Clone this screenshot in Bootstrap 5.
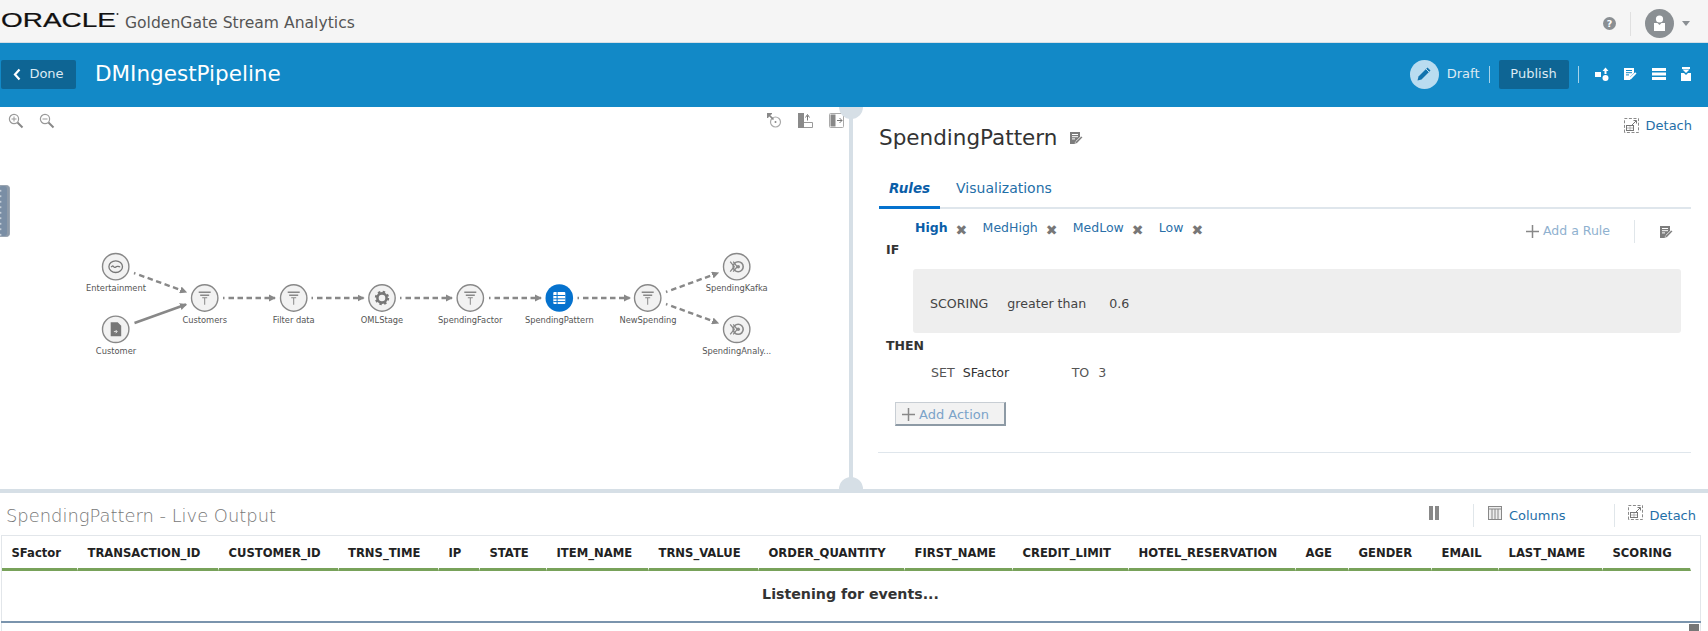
<!DOCTYPE html>
<html lang="en">
<head>
  <meta charset="UTF-8">
  <meta name="viewport" content="width=device-width, initial-scale=1.0">
  <title>DMIngestPipeline</title>
  <link rel="stylesheet" href="https://cdn.jsdelivr.net/npm/bootstrap@5.3.0/dist/css/bootstrap.min.css">
  <style>
    body { font-family: "DejaVu Sans", sans-serif; font-size: 13px; color: #333; height: 631px; overflow: hidden; background: #fff; }
    a { text-decoration: none; color: #1f6fa8; }
    .top-bar { height: 43px; background: #f5f5f5; border-bottom: 1px solid #d6dfe6; padding: 5px 16px 0 0; }
    .logo-svg { margin-left: 1px; }
    .app-name { font-size: 15.6px; color: #555; margin-left: 6px; }
    .top-sep { width: 1px; height: 24px; background: #e0e0e0; margin: 0 14px; }
    .pipe-bar { height: 64px; background: #1289c7; color: #fff; padding: 0 16px 2px 1px; }
    .pipe-btn { height: 29px; background: #0e6594; color: #dceaf3; border: 0; border-radius: 2px; font-size: 13px; padding: 0; }
    .btn-done { width: 75px; margin-right: 19px; }
    .btn-publish { width: 70px; margin: 0 9px; }
    .pipe-title { font-size: 21.5px; margin: 0; font-weight: 400; }
    .draft-dot { width: 29px; height: 29px; border-radius: 50%; background: #b9dcf0; margin-right: 8px; }
    .draft-label { color: #dceaf3; margin-right: 9px; }
    .bar-sep { width: 1px; height: 17px; background: #a5d3ea; }
    .bar-icons { gap: 14.5px; margin-left: 16px; }
    .main-row { height: 382px; overflow: hidden; }
    .canvas-pane { width: 849px; flex: none; position: relative; }
    .canvas-pane svg.diagram { display: block; }
    .canvas-pane text { font-family: "DejaVu Sans", sans-serif; font-size: 8.3px; fill: #555; text-anchor: middle; }
    .canvas-tools { position: absolute; top: 6px; left: 8px; right: 5px; }
    .zoom-out { margin-left: 15px; }
    .side-tab { position: absolute; left: 0; top: 78px; width: 10px; height: 52px; background: #7a8ea5 radial-gradient(circle, #c5ced8 .9px, transparent 1.2px) -2px 2px / 5px 5.5px repeat-y; border: 1px solid #9aa5b1; border-left: 0; border-radius: 0 4px 4px 0; box-shadow: inset -2px 0 0 #8e9aa8; }
    .v-split { width: 4px; flex: none; background: #d6dfe6; position: relative; }
    .v-split::before { content: ""; position: absolute; left: -10px; top: -12px; width: 24px; height: 24px; border-radius: 50%; background: #d6dfe6; }
    .rule-pane { flex: 1; padding: 0 17px 0 26px; position: relative; }
    .detach-top { position: absolute; top: 9px; right: 16px; }
    .detach-link { font-size: 13px; gap: 7px; }
    .rule-title { font-size: 21.5px; font-weight: 400; color: #333; margin: 0; height: 61px; gap: 12px; }
    .rule-tabs { border-bottom: 2px solid #dfe6ec; height: 41px; }
    .rule-tabs a { display: block; font-size: 14px; padding: 10px 10px 0; height: 41px; }
    .rule-tabs a.active-tab { font-size: 13.5px; font-weight: 700; font-style: italic; color: #0a5ea8; border-bottom: 3px solid #0572ce; margin-right: 6px; }
    .rule-head { height: 49px; position: relative; padding: 10px 0 0 36px; }
    .rule-link { font-size: 12.5px; margin-right: 8px; color: #2a6fa8; }
    .rule-link.current { font-weight: 700; color: #0a5ea8; }
    .rule-x { color: #777; font-size: 14px; line-height: 1; width: 19px; margin-right: 8px; padding-top: 4px; }
    .rule-word { font-weight: 700; color: #333; font-size: 12.5px; padding-left: 7px; }
    .word-if { position: absolute; left: 7px; top: 32px; padding-left: 0; }
    .add-rule { position: absolute; right: 2px; top: 11px; color: #8fb1cf; font-size: 12.5px; }
    .add-rule-sep { width: 1px; height: 23px; background: #e0e6ea; margin: 0 24px; }
    .cond-box { height: 64px; margin-left: 34px; margin-right: 10px; background: #eee; border-radius: 3px; padding-left: 17px; gap: 19px; color: #444; margin-top: 11px; padding-top: 6px; font-size: 12.6px; }
    .set-row { padding-left: 52px; height: 24px; margin-top: 6px; color: #555; font-size: 12.6px; }
    .set-field { width: 109px; margin-left: 8px; color: #333; }
    .set-val { margin-left: 9px; }
    .add-action { width: 111px; height: 24px; margin-left: 16px; margin-top: 16px; background: #f2f2f2; border: 1px solid #c8ced4; border-right: 2px solid #8d9aa5; border-bottom: 2px solid #8d9aa5; border-radius: 0; color: #7ba3c9; font-size: 13px; padding: 2px 0 0 6px; gap: 4px; }
    .rule-end { border-top: 1px solid #dfe6ec; margin: 26px 0 0 -1px; }
    .h-split { height: 4px; background: #d6dfe6; position: relative; }
    .h-split::before { content: ""; position: absolute; left: 839px; top: -12px; width: 24px; height: 12px; border-radius: 12px 12px 0 0; background: #d6dfe6; }
    .out-head { height: 42px; padding: 0 12px 0 6px; }
    .out-title { font-size: 17.9px; font-weight: 200; color: #777; margin: 0; padding-top: 4px; }
    .out-sep { width: 1px; height: 23px; background: #e0e6ea; }
    .out-tools { padding-top: 3px; }
    .out-tools a { font-size: 13px; }
    .out-tools svg.raise { margin-top: -6px; }
    .columns-link { margin-left: 6.5px; }
    .sep-pause { margin: 0 14px 0 34px; }
    .sep-columns { margin: 0 13px 0 48px; }
    .table-wrap { margin-left: 1px; width: 1700px; height: 96px; border: 1px solid #e2e6ea; border-bottom: 0; position: relative; }
    .stream-table { table-layout: fixed; width: 1689px; margin: 0; border-collapse: separate; border-spacing: 0; }
    .stream-table th { font-size: 11.6px; font-weight: 700; color: #222; height: 34.5px; padding: 3px 0 0 9.5px; border: 0; border-right: 1px solid #fff; border-bottom: 3px solid #78a25a; vertical-align: middle; white-space: nowrap; }
    .stream-table td { height: 50px; text-align: center; font-weight: 700; font-size: 14.2px; color: #333; border-bottom: 2px solid transparent; padding: 0 0 0 8px; vertical-align: middle; }
    .table-end { border-top: 2px solid #7a94ad; margin-left: -1px; width: 1700px; }
    .scroll-thumb { position: absolute; right: 1px; bottom: 0; width: 10px; height: 7px; background: #777; }
  </style>
</head>
<body>
  <svg width="0" height="0" class="position-absolute">
    <defs>
      <symbol id="ic-edit" viewBox="0 0 14 14">
        <path d="M1 1h10v5l-4 4v3H1z" fill="#7d7d7d"/>
        <path d="M3 3.5h6M3 5.7h6M3 7.9h3" stroke="#fff" stroke-width="1"/>
        <path d="M12.2 5.3l1.3 1.3L8 12.3l-2 .5.5-2z" fill="#7d7d7d" stroke="#fff" stroke-width=".5"/>
      </symbol>
      <symbol id="ic-detach" viewBox="0 0 15 15">
        <path d="M.5 14.5v-14h14v14z" fill="none" stroke="#8a8a8a" stroke-dasharray="3 1.6"/>
        <rect x="2.5" y="7.5" width="7" height="5" fill="none" stroke="#777"/>
        <path d="M3 10h6M6 8v4" stroke="#999" stroke-width=".7"/>
        <path d="M8 7l4-4M9.5 2.5h3v3" fill="none" stroke="#777"/>
      </symbol>
      <symbol id="n-filter" viewBox="-14 -14 28 28">
        <path d="M-6-6.5H6v1.6H-6zM-4.5-3.5h9v1.5h-9z" fill="#888"/>
        <path d="M-2.5-.8h5v1h-2v6.5h-1V.2h-2z" fill="#888"/>
      </symbol>
      <symbol id="n-sink" viewBox="-14 -14 28 28">
        <circle cx="1.5" cy="0" r="5" fill="none" stroke="#888" stroke-width="1.6"/>
        <circle cx="1.5" cy="0" r="1.8" fill="#888"/>
        <path d="M-6.5-5l4 5-4 5M-3.5-5l4 5-4 5" fill="none" stroke="#888" stroke-width="1.3"/>
      </symbol>
    </defs>
  </svg>

  <header class="top-bar d-flex align-items-center">
    <svg class="logo-svg" width="118" height="28" viewBox="0 0 118 28">
      <text x="0" y="17" font-family="Liberation Sans" font-size="19.5" fill="#111" stroke="#111" stroke-width=".2" textLength="115" lengthAdjust="spacingAndGlyphs">ORACLE</text>
      <circle cx="116.5" cy="4" r="1" fill="#333"/>
    </svg>
    <span class="app-name">GoldenGate Stream Analytics</span>
    <div class="ms-auto d-flex align-items-center">
      <svg width="13" height="13" viewBox="0 0 13 13"><circle cx="6.5" cy="6.5" r="6.5" fill="#8a8f93"/><text x="6.5" y="10" font-size="9.5" font-weight="700" fill="#fff" text-anchor="middle" font-family="DejaVu Sans">?</text></svg>
      <div class="top-sep"></div>
      <svg width="29" height="29" viewBox="0 0 29 29"><circle cx="14.5" cy="14.5" r="14.5" fill="#8a8f93"/><circle cx="14.5" cy="10" r="3.6" fill="#fff"/><path d="M9 14h3.5l2 2 2-2H20v8H9z" fill="#fff"/></svg>
      <svg class="ms-2" width="10" height="6" viewBox="0 0 10 6"><path d="M0 0h8L4 5z" fill="#8a8f93"/></svg>
    </div>
  </header>

  <section class="pipe-bar d-flex align-items-center">
    <button class="pipe-btn btn-done d-flex align-items-center justify-content-center gap-2">
      <svg width="8" height="13" viewBox="0 0 8 13"><path d="M6.5 1.5L2 6.5l4.5 5" fill="none" stroke="#fff" stroke-width="2.2"/></svg>
      <span>Done</span>
    </button>
    <h1 class="pipe-title">DMIngestPipeline</h1>
    <div class="ms-auto d-flex align-items-center">
      <div class="draft-dot d-flex align-items-center justify-content-center">
        <svg width="16" height="16" viewBox="0 0 16 16"><path d="M11.5 1.5l3 3L5.5 13.5l-4 1 1-4z" fill="#1273ad"/><path d="M10 3l3 3" stroke="#b9dcf0"/></svg>
      </div>
      <span class="draft-label">Draft</span>
      <div class="bar-sep"></div>
      <button class="pipe-btn btn-publish">Publish</button>
      <div class="bar-sep"></div>
      <div class="d-flex align-items-center bar-icons">
        <svg width="14" height="14" viewBox="0 0 14 14" fill="#fff"><rect x="0" y="5" width="6" height="5"/><circle cx="10.5" cy="11" r="3"/><path d="M7.5 4l3-3.5 3 3.5h-2v3h-2V4z"/></svg>
        <svg width="14" height="14" viewBox="0 0 14 14"><path d="M1 1h10v5l-4 4v3H1z" fill="#fff"/><path d="M3 3.5h6M3 5.7h6M3 7.9h3" stroke="#1289c7"/><path d="M12.2 5.3l1.3 1.3L8 12.3l-2 .5.5-2z" fill="#fff"/></svg>
        <svg width="14" height="14" viewBox="0 0 14 14" fill="#fff"><rect y="1" width="14" height="3"/><rect y="5.5" width="14" height="3"/><rect y="10" width="14" height="3"/></svg>
        <svg width="12" height="14" viewBox="0 0 12 14" fill="#fff"><rect x="2" width="8" height="2"/><path d="M6 6L2.5 2.5h7z"/><path d="M1 6h3l2 2 2-2h3v8H1z"/></svg>
      </div>
    </div>
  </section>

  <main class="main-row d-flex">
    <div class="canvas-pane">
      <svg class="diagram" width="849" height="382" viewBox="0 107 849 382">
        <defs>
          <marker id="arr" markerWidth="3" markerHeight="3" refX="2.5" refY="1.5" orient="auto"><path d="M0 0L3 1.5 0 3z" fill="#888"/></marker>
        </defs>
        <g fill="none" stroke="#888" stroke-width="2.4" stroke-dasharray="1.5 4 5.5 3.5 5.5 3.5 5.5 3.5 5.5 3.5 5.5 3.5">
          <path d="M223 298H275" marker-end="url(#arr)"/>
          <path d="M311.5 298H363.5" marker-end="url(#arr)"/>
          <path d="M400 298H452" marker-end="url(#arr)"/>
          <path d="M489 298H541" marker-end="url(#arr)"/>
          <path d="M577.5 298H630" marker-end="url(#arr)"/>
          <path d="M134 273L186 292" marker-end="url(#arr)"/>
          <path d="M666 292L718 273" marker-end="url(#arr)"/>
          <path d="M666 304L718 323" marker-end="url(#arr)"/>
        </g>
        <path d="M134.5 323L186 304.5" stroke="#888" stroke-width="2.4" marker-end="url(#arr)"/>
        <g fill="#f2f2f2" stroke="#888" stroke-width="1.4">
          <circle cx="115.7" cy="266.7" r="13.2"/>
          <circle cx="115.7" cy="329.3" r="13.2"/>
          <circle cx="204.7" cy="298" r="13.2"/>
          <circle cx="293.7" cy="298" r="13.2"/>
          <circle cx="382" cy="298" r="13.2"/>
          <circle cx="470.3" cy="298" r="13.2"/>
          <circle cx="647.7" cy="298" r="13.2"/>
          <circle cx="736.7" cy="266.7" r="13.2"/>
          <circle cx="736.7" cy="329.3" r="13.2"/>
        </g>
        <circle cx="559.3" cy="298" r="13.8" fill="#0572ce"/>
        <!-- table node -->
        <g transform="translate(559.3 298)" fill="none" stroke="#fff">
          <rect x="-6" y="-6" width="12" height="12" rx="1" fill="#fff" stroke="none"/>
          <path d="M-6-2.5H6M-6 .8H6M-6 3.6H6M-2.2-6V6" stroke="#0572ce" stroke-width="1"/>
        </g>
        <use href="#n-filter" x="190.7" y="284" width="28" height="28"/>
        <use href="#n-filter" x="279.7" y="284" width="28" height="28"/>
        <use href="#n-filter" x="456.3" y="284" width="28" height="28"/>
        <use href="#n-filter" x="633.7" y="284" width="28" height="28"/>
        <use href="#n-sink" x="722.7" y="252.7" width="28" height="28"/>
        <use href="#n-sink" x="722.7" y="315.3" width="28" height="28"/>
        <!-- entertainment stream -->
        <g transform="translate(115.7 266.7)" fill="none" stroke="#777" stroke-width="1.3">
          <ellipse rx="6.8" ry="5.8"/>
          <path d="M-4.5.5q1.2-2 2.4-.6t2.2.4 2.2-.6 2.2.4"/>
        </g>
        <!-- customer file -->
        <g transform="translate(115.7 329.3)">
          <path d="M-5-7h7l3.5 3.5V7h-10.5z" fill="#777"/>
          <path d="M-1.8 2.3h3M0 .7l1.5 1.6L0 3.9" fill="none" stroke="#eee" stroke-width=".9"/>
        </g>
        <!-- gear -->
        <g transform="translate(382 298)" fill="none" stroke="#777">
          <circle r="4.6" stroke-width="2.6"/>
          <circle r="6.2" stroke-width="2" stroke-dasharray="2.4 2.47"/>
        </g>
        <text x="116" y="291">Entertainment</text>
        <text x="116" y="354">Customer</text>
        <text x="204.7" y="322.5">Customers</text>
        <text x="293.7" y="322.5">Filter data</text>
        <text x="382" y="322.5">OMLStage</text>
        <text x="470.3" y="322.5">SpendingFactor</text>
        <text x="559.3" y="322.5">SpendingPattern</text>
        <text x="648" y="322.5">NewSpending</text>
        <text x="736.7" y="291">SpendingKafka</text>
        <text x="736.7" y="354">SpendingAnaly...</text>
      </svg>
      <div class="side-tab"></div>
      <div class="canvas-tools d-flex align-items-start">
        <svg width="16" height="16" viewBox="0 0 16 16"><circle cx="6" cy="6" r="4.6" fill="none" stroke="#999" stroke-width="1.2"/><path d="M9.5 9.5l5 5" stroke="#888" stroke-width="2"/><path d="M3.5 6h5M6 3.5v5" stroke="#999"/></svg>
        <svg class="zoom-out" width="16" height="16" viewBox="0 0 16 16"><circle cx="6" cy="6" r="4.6" fill="none" stroke="#999" stroke-width="1.2"/><path d="M9.5 9.5l5 5" stroke="#888" stroke-width="2"/><path d="M3.5 6h5" stroke="#999"/></svg>
        <div class="ms-auto d-flex gap-3">
          <svg width="15" height="15" viewBox="0 0 15 15"><circle cx="8.5" cy="9" r="5" fill="none" stroke="#aaa" stroke-width="1.2"/><circle cx="8.5" cy="9" r="1" fill="#888"/><path d="M.5.5l6 6M.5 5V.5H5" fill="#888" stroke="#888" stroke-width="1.6"/></svg>
          <svg width="15" height="15" viewBox="0 0 15 15"><rect x="0" y="0" width="6" height="15" fill="#8a8a8a"/><path d="M6 9.5h8.5V14.5H6" fill="none" stroke="#999"/><path d="M9.5 7.5v-5M7.5 4.5l2-3 2 3" fill="none" stroke="#777"/></svg>
          <svg width="15" height="15" viewBox="0 0 15 15"><rect x=".5" y=".5" width="14" height="14" rx="1" fill="none" stroke="#aaa"/><rect x="1.5" y="1.5" width="5" height="12" fill="#888"/><path d="M8 7.5h5M10.5 5l2.500 2.500-2.500 2.500" fill="none" stroke="#777"/></svg>
        </div>
      </div>
    </div>
    <div class="v-split"></div>
    <div class="rule-pane">
      <a href="#" class="detach-top detach-link d-flex align-items-center"><svg width="15" height="15"><use href="#ic-detach"/></svg>Detach</a>
      <h2 class="rule-title d-flex align-items-center">SpendingPattern <svg width="14" height="14"><use href="#ic-edit"/></svg></h2>
      <nav class="rule-tabs d-flex">
        <a href="#" class="active-tab">Rules</a>
        <a href="#">Visualizations</a>
      </nav>
      <div class="rule-head d-flex align-items-start">
        <a href="#" class="rule-link current">High</a><span class="rule-x">&#10006;</span>
        <a href="#" class="rule-link">MedHigh</a><span class="rule-x">&#10006;</span>
        <a href="#" class="rule-link">MedLow</a><span class="rule-x">&#10006;</span>
        <a href="#" class="rule-link">Low</a><span class="rule-x">&#10006;</span>
        <span class="rule-word word-if">IF</span>
        <div class="add-rule d-flex align-items-center">
          <svg class="me-1" width="13" height="13" viewBox="0 0 13 13"><path d="M6.5 0v13M0 6.5h13" stroke="#888" stroke-width="1.5"/></svg>
          <span>Add a Rule</span>
          <div class="add-rule-sep"></div>
          <svg class="me-3" width="14" height="14"><use href="#ic-edit"/></svg>
        </div>
      </div>
      <div class="cond-box d-flex align-items-center">
        <span>SCORING</span><span>greater than</span><span class="ms-1">0.6</span>
      </div>
      <div class="rule-word mt-1">THEN</div>
      <div class="set-row d-flex align-items-center">
        <span>SET</span><span class="set-field">SFactor</span><span>TO</span><span class="set-val">3</span>
      </div>
      <button class="add-action d-flex align-items-center">
        <svg width="13" height="13" viewBox="0 0 13 13"><path d="M6.5 0v13M0 6.5h13" stroke="#888" stroke-width="1.5"/></svg>
        <span>Add Action</span>
      </button>
      <div class="rule-end"></div>
    </div>
  </main>

  <div class="h-split"></div>

  <section class="out-head d-flex align-items-center justify-content-between">
    <h3 class="out-title">SpendingPattern - Live Output</h3>
    <div class="out-tools d-flex align-items-center">
      <svg class="raise" width="10" height="14" viewBox="0 0 10 14" fill="#888"><rect width="4" height="14"/><rect x="6" width="4" height="14"/></svg>
      <div class="out-sep sep-pause"></div>
      <svg class="raise" width="14" height="14" viewBox="0 0 14 14"><rect x=".5" y=".5" width="13" height="13" fill="#eee" stroke="#888"/><path d="M.5 3h13M4 3v10M7 3v10M10 3v10" stroke="#888"/></svg>
      <a href="#" class="columns-link">Columns</a>
      <div class="out-sep sep-columns"></div>
      <a href="#" class="detach-link d-flex align-items-center"><svg class="raise" width="15" height="15"><use href="#ic-detach"/></svg>Detach</a>
    </div>
  </section>

  <div class="table-wrap">
    <table class="table stream-table">
      <colgroup id="streamCols"></colgroup>
      <thead>
        <tr id="streamHead"></tr>
      </thead>
      <tbody>
        <tr><td colspan="17">Listening for events...</td></tr>
      </tbody>
    </table>
    <div class="table-end"></div>
    <div class="scroll-thumb"></div>
  </div>

  <script src="https://cdn.jsdelivr.net/npm/bootstrap@5.3.0/dist/js/bootstrap.bundle.min.js"></script>
  <script>
    // column name, width in px
    const columns = [
      ["SFactor", 76], ["TRANSACTION_ID", 141], ["CUSTOMER_ID", 119.5], ["TRNS_TIME", 100.5],
      ["IP", 41], ["STATE", 67], ["ITEM_NAME", 102], ["TRNS_VALUE", 110], ["ORDER_QUANTITY", 146],
      ["FIRST_NAME", 108], ["CREDIT_LIMIT", 116], ["HOTEL_RESERVATION", 167], ["AGE", 53],
      ["GENDER", 83], ["EMAIL", 67], ["LAST_NAME", 104], ["SCORING", 88]
    ];
    const colgroup = document.getElementById("streamCols");
    const head = document.getElementById("streamHead");
    columns.forEach(([name, width]) => {
      const col = document.createElement("col");
      col.style.width = width + "px";
      colgroup.appendChild(col);
      const th = document.createElement("th");
      th.textContent = name;
      head.appendChild(th);
    });
  </script>
</body>
</html>
